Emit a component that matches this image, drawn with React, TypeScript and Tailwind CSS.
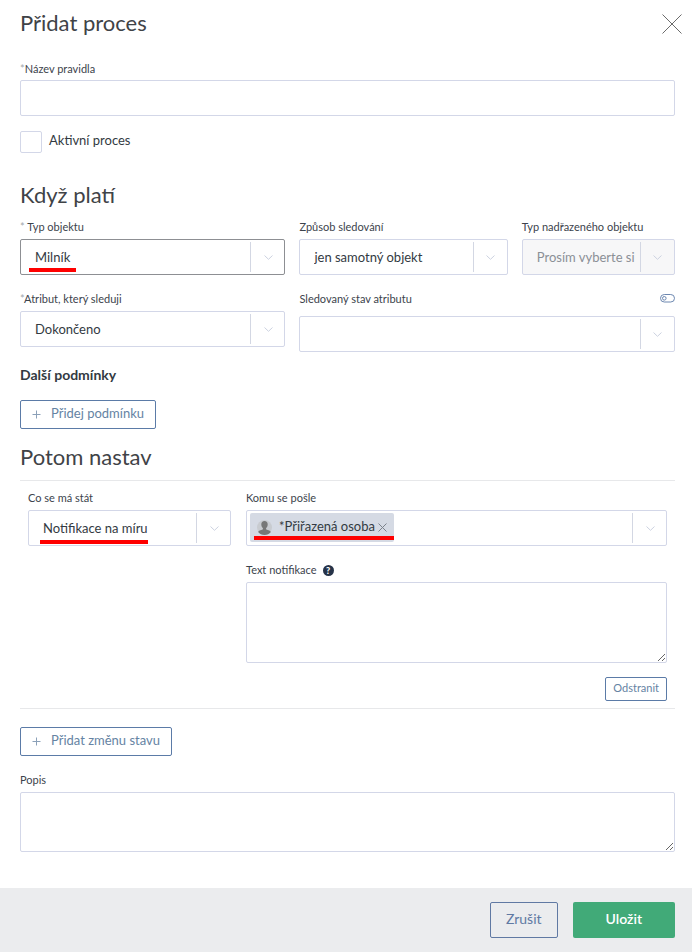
import * as React from 'react';
import clsx from 'clsx';

interface FieldLabelProps {
  htmlFor: string;
  required?: boolean;
  children: React.ReactNode;
}

const FieldLabel: React.FC<FieldLabelProps> = ({ htmlFor, required, children }) => {
  return (
    <label htmlFor={htmlFor} className="block text-[11px] leading-4 text-[#3c434c]">
      {required && <span className="text-[#a3a7ad]">*</span>}
      {children}
    </label>
  );
};

const Chevron: React.FC = () => {
  return (
    <span className="pointer-events-none absolute inset-y-[3px] right-0 flex w-[35px] items-center justify-center border-l border-[#d3d7e3]">
      <svg width="9" height="5" viewBox="0 0 9 5" fill="none" stroke="#ccd2e0" aria-hidden="true">
        <path d="M0.5 0.5L4.5 4.3L8.5 0.5" />
      </svg>
    </span>
  );
};

interface SelectProps {
  id: string;
  value?: string;
  active?: boolean;
  disabled?: boolean;
  children?: React.ReactNode;
}

const Select: React.FC<SelectProps> = ({ id, value = '', active, disabled, children }) => {
  return (
    <div className="relative">
      <select
        id={id}
        defaultValue={value}
        disabled={disabled}
        className={clsx(
          'block h-9 w-full appearance-none rounded-xs border pt-0.5 pr-9 pl-3.5 text-[13px] outline-none',
          active ? 'border-[#8d8f93]' : 'border-[#d3d7e8]',
          disabled ? 'bg-[#f7f7f8] text-[#8b8f96] opacity-100' : 'bg-white text-[#333a42]'
        )}
      >
        <option value={value}>{value}</option>
      </select>
      <Chevron />
      {children}
    </div>
  );
};

const AddButton: React.FC<{ children: React.ReactNode }> = ({ children }) => {
  return (
    <button
      type="button"
      className="flex h-[29px] items-center gap-2.5 rounded-xs border border-[#5b7ba7] bg-white px-[11px] text-[13px] leading-5 text-[#6583a3]"
    >
      <svg width="9" height="9" viewBox="0 0 9 9" stroke="#8ba0b8" aria-hidden="true">
        <path d="M4.5 0.5V8.5M0.5 4.5H8.5" />
      </svg>
      <span className="pb-[3px]">{children}</span>
    </button>
  );
};

const heading = 'text-[22px] leading-7 text-[#3f4347]';
const textArea = 'block w-full resize rounded-xs border border-[#d3d7e8] bg-white p-2 text-[13px] outline-none';

export default function App() {
  return (
    <form className="bg-white font-['Lato',sans-serif] text-[13px] text-[#333a42]" onSubmit={(e) => e.preventDefault()}>
      <div className="pt-[9px] pr-[17px] pb-9 pl-5">
        <header className="flex items-center justify-between">
          <h1 className={heading}>Přidat proces</h1>
          <button type="button" aria-label="Zavřít" className="-mr-[7px] pt-0.5">
            <svg className="block" width="20" height="20" viewBox="0 0 20 20" fill="none" stroke="#6b6b6b" aria-hidden="true">
              <path d="M0.5 0.5L19.5 19.5M19.5 0.5L0.5 19.5" />
            </svg>
          </button>
        </header>

        <div className="mt-6">
          <FieldLabel htmlFor="rule-name" required>Název pravidla</FieldLabel>
          <input
            id="rule-name"
            type="text"
            className="mt-[3px] block h-9 w-full rounded-xs border border-[#d3d7e8] px-4 outline-none"
          />
        </div>

        <div className="mt-[15px] flex items-center gap-[7px]">
          <input
            id="active"
            type="checkbox"
            className="size-[22px] appearance-none rounded-xs border border-[#d3d7e8] checked:bg-[#41aa78]"
          />
          <label htmlFor="active" className="pb-1 leading-[18px]">Aktivní proces</label>
        </div>

        <h2 className={clsx(heading, 'mt-7')}>Když platí</h2>
        <div className="mt-2.5 grid grid-cols-[265fr_208fr_153fr] gap-x-[14px] gap-y-4">
          <div className="space-y-1">
            <FieldLabel htmlFor="object-type" required> Typ objektu</FieldLabel>
            <Select id="object-type" value="Milník" active>
              <span className="pointer-events-none absolute bottom-[3px] left-[9px] h-1 w-[47px] bg-[#fe0000]" />
            </Select>
          </div>
          <div className="space-y-1">
            <FieldLabel htmlFor="tracking">Způsob sledování</FieldLabel>
            <Select id="tracking" value="jen samotný objekt" />
          </div>
          <div className="space-y-1">
            <FieldLabel htmlFor="parent-type">Typ nadřazeného objektu</FieldLabel>
            <Select id="parent-type" value="Prosím vyberte si" disabled />
          </div>
          <div className="space-y-1">
            <FieldLabel htmlFor="attribute" required>Atribut, který sleduji</FieldLabel>
            <Select id="attribute" value="Dokončeno" />
          </div>
          <div className="col-span-2 space-y-[9px]">
            <div className="flex h-4 items-center justify-between">
              <FieldLabel htmlFor="attribute-state">Sledovaný stav atributu</FieldLabel>
              <button type="button" aria-label="Přepnout zadání" className="pb-0.5">
                <svg className="block" width="15" height="9" viewBox="0 0 15 9" fill="none" stroke="#6c87b0" aria-hidden="true">
                  <rect x="0.5" y="0.5" width="14" height="7.5" rx="3.75" />
                  <circle cx="4.3" cy="4.3" r="1.8" />
                </svg>
              </button>
            </div>
            <Select id="attribute-state" />
          </div>
        </div>

        <h3 className="mt-[13px] mb-[15px] text-sm leading-5 font-bold text-[#333a42]">Další podmínky</h3>
        <AddButton>Přidej podmínku</AddButton>

        <h2 className={clsx(heading, 'mt-3.5')}>Potom nastav</h2>
        <section className="mt-[9px] border-y border-[#e7e8ea] px-2 pt-[9px] pb-[7px]">
          <div className="grid grid-cols-[203fr_421fr] gap-x-[15px] gap-y-4">
            <div className="space-y-1">
              <FieldLabel htmlFor="action">Co se má stát</FieldLabel>
              <Select id="action" value="Notifikace na míru">
                <span className="pointer-events-none absolute bottom-0.5 left-3 h-1 w-[108px] bg-[#fe0000]" />
              </Select>
            </div>
            <div className="space-y-1">
              <FieldLabel htmlFor="recipients">Komu se pošle</FieldLabel>
              <div className="relative">
                <div className="flex h-9 rounded-xs border border-[#d3d7e8] pt-0.5 pr-9 pl-[3px]">
                  <span className="relative flex h-[29px] shrink-0 items-center rounded-xs bg-[#d5dae4] pr-[7px] pl-[7px]">
                    <svg width="15" height="15" viewBox="0 0 15 15" aria-hidden="true">
                      <circle cx="7.5" cy="7.5" r="7.5" fill="#c8cbd0" />
                      <path
                        d="M7.5 1C5.5 1 4.2 2.4 4.3 4.5C4.4 6.2 5 7.3 5.9 8.1V9.2C5.4 10 1.7 10.1 1.1 12C2.6 14 5 15 7.5 15S12.4 14 13.9 12C13.3 10.1 9.6 10 9.1 9.2V8.1C10 7.3 10.6 6.2 10.7 4.5C10.8 2.4 9.5 1 7.5 1Z"
                        fill="#777"
                      />
                    </svg>
                    <span className="ml-[7px] pb-[3px] leading-5">*Přiřazená osoba</span>
                    <button type="button" aria-label="Odebrat osobu" className="ml-[3px]">
                      <svg className="block" width="9" height="9" viewBox="0 0 9 9" stroke="#7c828c" aria-hidden="true">
                        <path d="M0.5 0.5L8.5 8.5M8.5 0.5L0.5 8.5" />
                      </svg>
                    </button>
                    <span className="pointer-events-none absolute right-0 bottom-0.5 left-1 h-1 bg-[#fe0000]" />
                  </span>
                  <input id="recipients" type="text" className="min-w-0 flex-1 px-2 outline-none" />
                </div>
                <Chevron />
              </div>
            </div>
            <div className="col-start-2 space-y-1">
              <div className="flex items-center gap-1.5">
                <FieldLabel htmlFor="notification">Text notifikace</FieldLabel>
                <span className="flex size-[11px] items-center justify-center rounded-full bg-[#263348] text-[9px] leading-none font-black text-white">
                  ?
                </span>
              </div>
              <textarea id="notification" className={clsx(textArea, 'h-[81px]')} />
            </div>
          </div>
          <div className="mt-3.5 flex justify-end">
            <button
              type="button"
              className="h-6 rounded-xs border border-[#5b7ba7] bg-white px-[7px] pb-0.5 text-[11px] leading-4 text-[#6583a3]"
            >
              Odstranit
            </button>
          </div>
        </section>

        <div className="mt-[18px]">
          <AddButton>Přidat změnu stavu</AddButton>
        </div>

        <div className="mt-4 space-y-1">
          <FieldLabel htmlFor="description">Popis</FieldLabel>
          <textarea id="description" className={clsx(textArea, 'h-[60px]')} />
        </div>
      </div>

      <footer className="flex justify-end gap-[15px] bg-[#ebecee] py-3.5 pr-[17px] pl-5 text-sm">
        <button type="button" className="h-9 rounded-xs border border-[#6079a3] px-[15px] pb-0.5 text-[#6079a3]">
          Zrušit
        </button>
        <button type="submit" className="h-9 rounded-xs bg-[#41aa78] px-[33px] pb-0.5 font-semibold text-white">
          Uložit
        </button>
      </footer>
    </form>
  );
}
